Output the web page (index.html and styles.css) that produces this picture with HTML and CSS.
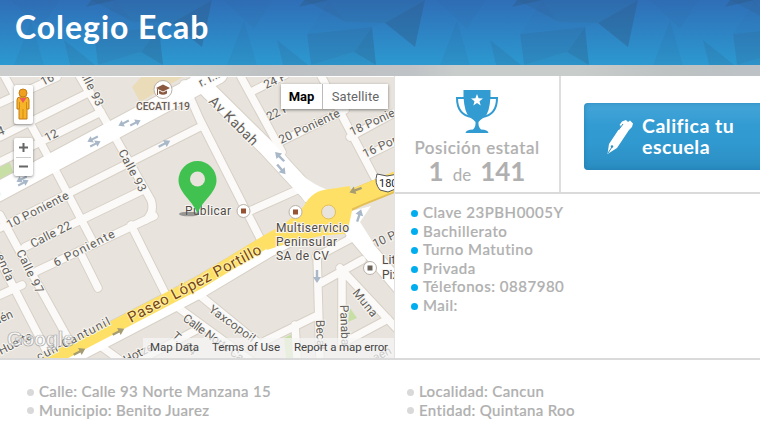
FILE: index.html
```html
<!DOCTYPE html>
<html lang="es">
<head>
<meta charset="utf-8">
<title>Colegio Ecab</title>
<link rel="stylesheet" href="styles.css">
</head>
<body>
<header class="header">
  <svg class="header-bg" width="760" height="65" viewBox="0 0 760 65">
    <defs>
      <linearGradient id="sky" x1="0" y1="0" x2="0" y2="1"><stop offset="0" stop-color="#2f6eb7"/><stop offset="1" stop-color="#2c99d0"/></linearGradient>
      <pattern id="facets" width="213" height="65" patternUnits="userSpaceOnUse" x="83">
        <g fill="#2c5580">
          <path d="M3 7L8 0H33Z" opacity=".35"/>
          <path d="M8 0H129L89 23L50 22Z" opacity=".16"/>
          <path d="M89 23L129 0L119 47Z" opacity=".36"/>
          <path d="M15 65L11 34L33 0L50 22L89 23L76 27L58 52Z" opacity=".06"/>
          <path d="M15 65L11 34L76 27L58 52Z" opacity=".14"/>
          <path d="M58 52L76 27L80 65Z" opacity=".3"/>
          <path d="M58 52L15 65H80Z" opacity=".1"/>
          <path d="M161 20L144 65H174Z" opacity=".1"/>
          <path d="M140 0H190L171 29Z" opacity=".07"/>
          <path d="M194 40L213 55V65H200ZM0 55L12 65H0Z" opacity=".16"/>
        </g>
      </pattern>
    </defs>
    <rect width="760" height="65" fill="url(#sky)"/>
    <rect width="760" height="65" fill="url(#facets)"/>
  </svg>
  <h1 class="title">Colegio Ecab</h1>
</header>
<div class="strip"></div>
<main class="main">
  <section class="map">
    <svg class="map-art" width="394" height="281" viewBox="0 77 394 281">
      <defs>
        <g id="streets">
          <path d="M0 103L57 77M0 137L90 92M0 162L101 112M0 228L200 127M25 247L143 190M37 271L154 216M5 77L50 160L92 240M80 252L98 288M0 215L20 252L70 342M-3 255L46 350M76 70L107 123L151 200Q155 212 146 220M131 225L166 295M184 84L200 120L265 248M241 77L282 152M318 70L378 184M250 211L297 190M253 91L285 75M278 143L345 110M350 137L394 113M366 156L394 142"/>
          <path d="M165 298L250 360M197 293L262 346M265 341L318 315M317 254L320 360M319 284L362 260M342 274V345M340 268L398 330M316 257L352 238M345 342L388 319M95 342L120 360M140 360L200 328M295 325L297 358M0 295L22 285"/>
        </g>
        <path id="avenue" d="M-8 195L218 74"/>
        <path id="kabah" d="M198 80L267 148L315 200"/>
        <path id="libre" d="M345 222L400 287"/>
        <path id="arrow" d="M-6 1.2H1V4L7 0L1 -4V-1.2H-6Z"/>
      </defs>
      <rect y="77" width="394" height="281" fill="#e8e4dd"/>
      <path d="M132 87L144 74H188L140 102Z" fill="#eadcb9"/>
      <path d="M0 167L10 162L13 173L0 181ZM284 338L292 334V358H286ZM350 308L357 318L348 322Z" fill="#c7dfa5"/>
      <g fill="none" stroke-linejoin="round" stroke-linecap="round">
        <g stroke="#d7d0c6">
          <use href="#streets" stroke-width="9.500"/>
          <use href="#avenue" stroke-width="21"/>
          <use href="#kabah" stroke-width="18"/>
          <use href="#libre" stroke-width="17"/>
          <path d="M50 365L200 287L267 247L320 220" stroke-width="23"/>
        </g>
        <g stroke="#fbfaf8">
          <use href="#streets" stroke-width="7.500"/>
        </g>
        <g stroke="#fff">
          <use href="#avenue" stroke-width="19"/>
          <use href="#kabah" stroke-width="16"/>
          <use href="#libre" stroke-width="15"/>
          <path d="M50 365L200 287L267 247L320 220" stroke-width="21"/>
        </g>
        <path d="M283 152Q300 180 328 190L305 202L290 180Z" fill="#fff"/>
        <path d="M335 208L358 197L400 180" stroke="#e3bf55" stroke-width="20"/>
        <path d="M35 368L200 282L267 241L305 220" stroke="#ffe066" stroke-width="13"/>
        <path d="M335 206L358 196L400 179" stroke="#ffe066" stroke-width="18"/>
      </g>
      <path d="M262 238Q290 222 304 206Q312 190 330 189L350 186L352 210Q352 226 345 234Q315 234 267 250Z" fill="#ffe066"/>
      <path d="M346 238L352 211L371 206L360 222L374 244Z" fill="#fff"/>
      <circle cx="328.500" cy="212" r="7" fill="#e8e4dd" stroke="#e3bf55"/>
      <g fill="#a9b8c9">
        <use href="#arrow" transform="translate(124 123) rotate(153) scale(.9)"/>
        <use href="#arrow" transform="translate(135 123) rotate(-27) scale(.9)"/>
        <use href="#arrow" transform="translate(93 139) rotate(153) scale(.9)"/>
        <use href="#arrow" transform="translate(95 144) rotate(-27) scale(.9)"/>
        <use href="#arrow" transform="translate(22 179) rotate(153) scale(.9)"/>
        <use href="#arrow" transform="translate(23 183) rotate(-27) scale(.9)"/>
        <use href="#arrow" transform="translate(164 144) rotate(-27)"/>
        <use href="#arrow" transform="translate(280 157) rotate(-135)"/>
        <use href="#arrow" transform="translate(281 169) rotate(50)"/>
        <use href="#arrow" transform="translate(317 276) rotate(90)"/>
        <use href="#arrow" transform="translate(359 216) rotate(-72)"/>
        <g fill="#a69c72">
          <use href="#arrow" transform="translate(356 190) rotate(160)"/>
          <use href="#arrow" transform="translate(118 332) rotate(-27)"/>
          <use href="#arrow" transform="translate(79 352) rotate(-27)"/>
        </g>
      </g>
      <g class="labels">
        <text transform="translate(43 86) rotate(-27)">16</text>
        <text transform="translate(80 73) rotate(64)" textLength="38">alle 93</text>
        <text transform="translate(-1 136) rotate(-20)">4</text>
        <text transform="translate(47 142) rotate(-27)">12</text>
        <text transform="translate(118 152) rotate(62)" textLength="46">Calle 93</text>
        <text transform="translate(-5 198) rotate(-27)">o</text>
        <text transform="translate(9 229) rotate(-27)" textLength="68">10 Poniente</text>
        <text transform="translate(33 248) rotate(-27)" textLength="44">Calle 22</text>
        <text transform="translate(56 267) rotate(-27)" textLength="67">6 Poniente</text>
        <text transform="translate(16 252) rotate(64)" textLength="47">Calle 97</text>
        <text transform="translate(-4 256) rotate(67)" textLength="28">enda</text>
        <text transform="translate(-4 325) rotate(-24)">aén</text>
        <text transform="translate(1 355) rotate(-27)">Huerta</text>
        <text transform="translate(39 361) rotate(-27)" textLength="81">cun-Cantunil</text>
        <text transform="translate(201 87) rotate(-27)">r. I...</text>
        <text class="big" transform="translate(208 102) rotate(45)" textLength="63">Av Kabah</text>
        <text transform="translate(266 89) rotate(-25)">24 P</text>
        <text transform="translate(269 121) rotate(-27)">22 P</text>
        <text transform="translate(281 144) rotate(-25)" textLength="66">20 Poniente</text>
        <text transform="translate(352 136) rotate(-25)" textLength="66">18 Poniente</text>
        <text transform="translate(365 158) rotate(-25)" textLength="66">16 Poniente</text>
        <text class="route" transform="translate(131 323) rotate(-28)" textLength="149">Paseo López Portillo</text>
        <text transform="translate(208 311) rotate(36)" textLength="54">Yaxcopoil</text>
        <text transform="translate(182 320) rotate(36)" textLength="72">Calle Norte Ca</text>
        <text transform="translate(126 364) rotate(-27)">Hotze</text>
        <text transform="translate(171 337) rotate(42)">T...64</text>
        <text transform="translate(352 293) rotate(51)" textLength="32">Muna</text>
        <text transform="translate(340 305) rotate(88)">Panaba</text>
        <text transform="translate(316 320) rotate(88)">Becal</text>
        <text transform="translate(375 248) rotate(-25)">10 Po</text>
        <text transform="translate(375 362) rotate(-27)">aen</text>
        <text x="136" y="110" class="poi" textLength="54">CECATI 119</text>
        <text x="185" y="215" class="poi pub" textLength="46">Publicar</text>
        <text x="276" y="232" class="poi pub" textLength="73">Multiservicio</text>
        <text x="276" y="246" class="poi pub" textLength="61">Peninsular</text>
        <text x="276" y="260" class="poi pub" textLength="53">SA de CV</text>
        <text x="382" y="264" class="poi pub">Lito</text>
        <text x="382" y="279" class="poi pub">Pixel</text>
      </g>
      <g fill="#fff" stroke="#b9b2a9" stroke-width="1">
        <circle cx="163" cy="89.500" r="9"/><circle cx="243.500" cy="211" r="6.500"/><circle cx="295.500" cy="212" r="6.500"/><circle cx="370" cy="268" r="6.500"/>
      </g>
      <path d="M156 88L163 84.500L170 88L163 91.500ZM159 90.500L163 92.500L167 90.500V93.500Q163 96 159 93.500ZM157 89H158V95H157Z" fill="#8a5940"/>
      <path d="M241 208.500H246V213.500H241ZM293 209.500H298V214.500H293Z" fill="#965435"/>
      <path d="M367.500 265.500H372.500V270.500H367.500Z" fill="#6b6259"/>
      <path d="M377 174L387 176L398 174V188L388 192L380 190Q374 183 377 174Z" fill="#fff" stroke="#555"/>
      <text class="shield" x="379" y="187">180</text>
      <ellipse cx="189" cy="214" rx="10" ry="2.300" fill="#555" opacity=".55"/>
      <path d="M197.500 214C195 203 178.500 193 178.500 180.500A19 19.500 0 0 1 216.500 180.500C216.500 193 200 203 197.500 214Z" fill="#41c250"/>
      <circle cx="197.500" cy="179" r="7.500" fill="#e8e4dd"/>
      <path d="M143 338H394V358H143Z" fill="#f5f5f5" opacity=".72"/>
      <text class="google" x="7" y="346" textLength="67">Google</text>
      <g class="legal"><text x="150" y="351" textLength="49">Map Data</text><text x="212" y="351" textLength="68">Terms of Use</text><text x="294" y="351" textLength="94">Report a map error</text></g>
    </svg>
    <div class="pegman">
      <svg width="16" height="34" viewBox="0 0 16 34"><path d="M2 12Q2 9 5 9H11Q14 9 14 12V21H12V31H4V21H2Z" fill="#f6b426" stroke="#c67b13"/><path d="M4.500 10H11.500L8 15Z" fill="#ee5b5b"/><path d="M8 21V31M4.500 14V21M11.500 14V21" stroke="#d38b17" fill="none"/><circle cx="8" cy="5" r="4" fill="#efa11e" stroke="#c67b13"/></svg>
    </div>
    <div class="zoom"><svg width="19" height="38" viewBox="0 0 19 38"><path d="M5 9.500H14M9.500 5V14M5 28.500H14" stroke="#666" stroke-width="2"/><path d="M2 19.500H17" stroke="#ccc"/></svg></div>
    <div class="types"><span class="type active">Map</span><span class="type">Satellite</span></div>
  </section>
  <section class="side">
    <div class="top">
      <div class="rank">
        <svg class="trophy" width="44" height="44" viewBox="0 0 44 44">
          <path d="M9 9H2Q2 26 17 28M35 9H42Q42 26 27 28" fill="none" stroke="#329bd1" stroke-width="2"/>
          <path d="M8.500 1H35.500V8Q34.500 24 29.500 28Q25 31 23.500 33Q23 38 26 40.500Q33 40.500 33.500 44H10.500Q11 40.500 18 40.500Q21 38 20.500 33Q19 31 14.500 28Q9.500 24 8.500 8Z" fill="#329bd1"/>
          <path d="M22 5L23.600 9.300L28 9.400L24.500 12.200L25.700 16.600L22 14.100L18.300 16.600L19.500 12.200L16 9.400L20.400 9.300Z" fill="#fff"/>
        </svg>
        <div class="rank-label">Posición estatal</div>
        <div class="rank-value"><b>1</b> <span>de</span> <b>141</b></div>
      </div>
      <div class="rate">
        <div class="button">
          <svg width="28" height="36" viewBox="0 0 28 36"><path d="M1.500 35L3 25L15 7L13.500 6L16 2.500L20 1L22 3L24 1.500L27 4.500L26 8L23 11L11 29Z" fill="#fff"/><path d="M2 34L6 28M12.500 11L17 5" stroke="#2e8fc4" fill="none"/><circle cx="6" cy="27.500" r="1.200" fill="#2e8fc4"/></svg>
          <span class="button-text">Califica tu<br>escuela</span>
        </div>
      </div>
    </div>
    <ul class="list facts">
      <li>Clave 23PBH0005Y</li>
      <li>Bachillerato</li>
      <li>Turno Matutino</li>
      <li>Privada</li>
      <li>Télefonos: 0887980</li>
      <li>Mail:</li>
    </ul>
  </section>
</main>
<footer class="address">
  <ul class="list"><li>Calle: Calle 93 Norte Manzana 15</li><li>Municipio: Benito Juarez</li></ul>
  <ul class="list"><li>Localidad: Cancun</li><li>Entidad: Quintana Roo</li></ul>
</footer>
</body>
</html>
```
FILE: styles.css
```css
* { box-sizing: border-box; }
body { margin: 0; width: 760px; height: 440px; overflow: hidden; background: #fff; color: #b0b0b0; font-family: "Lato", sans-serif; }
svg { display: block; flex: none; }
.header { position: relative; height: 65px; padding: 7px 15px; overflow: hidden; }
.header-bg { position: absolute; top: 0; left: 0; }
.title { position: relative; margin: 0; color: #fff; font-size: 32px; line-height: 40px; font-weight: 700; letter-spacing: .95px; white-space: nowrap; }
.strip { height: 11px; background: linear-gradient(90deg, #cbcecc, #c9ccca 20%, #bdc1c3 35%, #bfc3c6 54%, #c8cccb 60%, #c8cccb 76%, #bdc2c2 88%, #bcc2c6); }
.main { display: flex; height: 284px; border-bottom: 2px solid #dadada; }
.map { position: relative; flex: none; width: 394px; padding-top: 1px; overflow: hidden; }
.labels text { font: 12px "Roboto", sans-serif; fill: #625e5a; stroke: #f8f6f2; stroke-width: 2px; paint-order: stroke; }
.labels .big { font-size: 14px; }
.labels .route { font-size: 15px; fill: #774611; stroke: #fff0ab; }
.labels .poi { font-size: 10.5px; font-weight: 500; fill: #6c5c56; }
.labels .pub { font-size: 12px; font-weight: 400; fill: #514b48; }
.shield { font: 11px "Roboto", sans-serif; fill: #222; }
.google { font: bold 20px "Liberation Sans", sans-serif; fill: #fff; fill-opacity: .65; stroke: #aaa; stroke-width: .7px; }
.legal { font: 11.5px "Roboto", sans-serif; fill: #444; }
.pegman, .zoom, .types { position: absolute; background: #fff; box-shadow: 0 1px 3px rgba(0, 0, 0, .45); }
.pegman { top: 9px; left: 14px; width: 19px; height: 39px; padding: 3px 1px; border-radius: 2px; }
.zoom { top: 62px; left: 14px; width: 19px; height: 38px; border-radius: 2px; }
.types { display: flex; top: 8px; left: 281px; width: 107px; height: 25px; font: 13px/26px "Roboto", sans-serif; color: #666; text-align: center; }
.type { flex: 1; letter-spacing: .1px; }
.active { flex: 0 0 42px; border-right: 1px solid #bbb; color: #000; font-weight: 700; letter-spacing: 0; }
.side { flex: 1; min-width: 0; border-left: 1px solid #e2e2e2; }
.top { display: flex; height: 118px; border-bottom: 2px solid #dadada; }
.rank { display: flex; flex: none; flex-direction: column; align-items: center; width: 166px; padding-top: 13px; border-right: 2px solid #dedede; }
.rank-label { margin-top: 5px; font-size: 17px; line-height: 20px; letter-spacing: .55px; font-weight: 500; white-space: nowrap; -webkit-text-stroke: .2px #b0b0b0; }
.rank-value { display: flex; align-items: baseline; gap: 9px; font-size: 17px; line-height: 24px; margin-top: 1px; white-space: nowrap; }
.rank-value b { font-size: 26px; line-height: 24px; }
.rate { flex: 1; min-width: 0; padding: 27px 0 0 23px; overflow: hidden; }
.button { display: flex; align-items: center; width: 190px; height: 67px; padding-left: 22px; border-radius: 4px; background: linear-gradient(#46a5d8, #319bd2 35%, #3099d0 60%, #2b8dc1); color: #fff; box-shadow: inset 0 0 4px rgba(25, 110, 165, .6); }
.button-text { margin-left: 8px; margin-top: -1px; font-size: 19.500px; line-height: 21px; font-weight: 700; letter-spacing: .5px; white-space: nowrap; font-variant-ligatures: none; }
.list { margin: 0; padding: 0; list-style: none; font-size: 15px; line-height: 18.600px; font-weight: 500; letter-spacing: .34px; -webkit-text-stroke: .2px #b0b0b0; }
.list li { display: flex; align-items: center; white-space: nowrap; }
.list li::before { content: ""; width: 7px; height: 7px; margin: 2px 5px 0 0; border-radius: 50%; background: #d9d9d9; }
.facts { padding: 9px 0 0 16px; letter-spacing: .52px; }
.facts li::before { background: #00aeef; }
.address { display: grid; grid-template-columns: 380px 1fr; padding: 22px 0 0 27px; }
```
